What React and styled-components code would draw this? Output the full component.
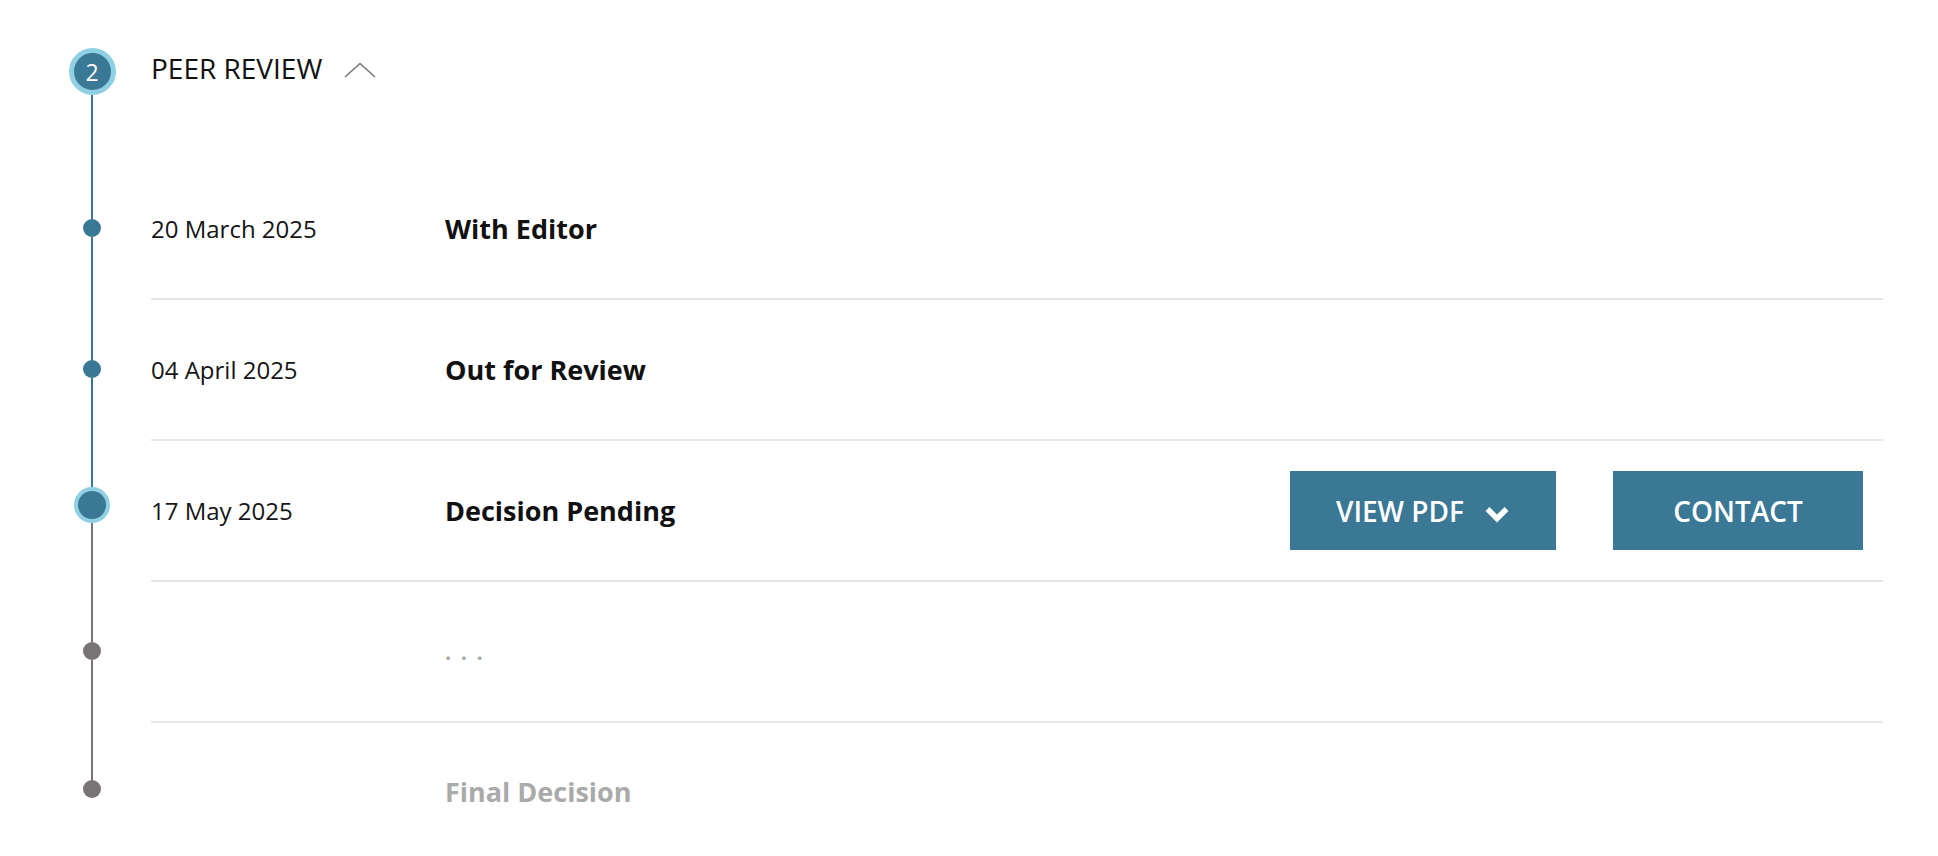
import React from 'react';
import styled, { createGlobalStyle } from 'styled-components';

const BLUE = '#3a7895';
const GRAY = '#787475';

const GlobalStyle = createGlobalStyle`
  html, body {
    margin: 0;
    background: #fff;
  }
  body {
    font-family: "Open Sans", "Liberation Sans", sans-serif;
    color: #111;
  }
`;

const Page = styled.div`
  padding: 0 55px 0 62px;
`;

const StageHeader = styled.div`
  display: flex;
  height: 159px;
`;

const Marker = styled.div`
  width: 60px;
  flex: none;
  display: flex;
  flex-direction: column;
  align-items: center;
  padding-top: ${p => p.$offset || 0}px;
  box-sizing: border-box;
`;

const Segment = styled.div`
  width: 2px;
  flex: 1;
  background: ${p => p.$color || 'transparent'};
`;

const Badge = styled.div`
  width: 47px;
  height: 47px;
  margin-top: -1px;
  flex: none;
  box-sizing: border-box;
  border-radius: 50%;
  border: 5px solid #8fd0e3;
  background: ${BLUE};
  color: #fff;
  font-size: 23px;
  display: flex;
  align-items: center;
  justify-content: center;
`;

const StageTitle = styled.div`
  margin: 49px 0 0 29px;
  height: 38px;
  display: flex;
  align-items: center;
  gap: 22px;
  font-size: 28px;
  line-height: 38px;
  color: #111;
  svg {
    margin-top: 4px;
  }
`;

const Row = styled.div`
  display: flex;
`;

const Dot = styled.div`
  flex: none;
  box-sizing: border-box;
  border-radius: 50%;
  width: ${p => (p.$current ? 36 : 18)}px;
  height: ${p => (p.$current ? 36 : 18)}px;
  margin: ${p => (p.$current ? '-14px 0 0' : '-4px 0 0')};
  background: ${p => (p.$pending ? GRAY : BLUE)};
  border: ${p => (p.$current ? '4px solid #8fd0e3' : 'none')};
`;

const RowBody = styled.div`
  flex: 1;
  margin-left: 29px;
  height: ${p => (p.$last ? 136 : 139)}px;
  display: grid;
  grid-template-columns: 294px 1fr auto;
  align-items: center;
  border-bottom: ${p => (p.$last ? 'none' : '2px solid #e6e6e6')};
`;

const DateText = styled.div`
  font-size: 24px;
  color: #151515;
`;

const StepTitle = styled.div`
  font-size: 27px;
  font-weight: 700;
  color: ${p => (p.$pending ? '#aaaaaa' : '#111')};
`;

const Ellipsis = styled.div`
  font-size: 22px;
  font-weight: 700;
  color: #a8a8a8;
  letter-spacing: 9.5px;
  margin-top: -2px;
`;

const Actions = styled.div`
  display: flex;
  gap: 57px;
  padding-right: 20px;
`;

const Button = styled.button`
  width: ${p => p.$width}px;
  height: 79px;
  border: none;
  border-radius: 0;
  background: ${BLUE};
  color: #fff;
  font-family: "Open Sans", "Liberation Sans", sans-serif;
  font-size: 28px;
  font-weight: 600;
  display: flex;
  align-items: center;
  justify-content: center;
  gap: 20px;
  padding: 0;
  cursor: pointer;
  svg {
    margin-top: 6px;
  }
`;

const ChevronUp = () => (
  <svg width="32" height="16" viewBox="0 0 32 16" fill="none">
    <polyline points="1,15 16,1.5 31,15" stroke="#7a7a7a" strokeWidth="1.6" />
  </svg>
);

const ChevronDown = () => (
  <svg width="26" height="18" viewBox="0 0 26 18" fill="none">
    <polyline points="3.5,4 13,13.5 22.5,4" stroke="#fff" strokeWidth="5.5" strokeLinejoin="miter" />
  </svg>
);

const steps = [
  { date: '20 March 2025', title: 'With Editor', above: BLUE, below: BLUE },
  { date: '04 April 2025', title: 'Out for Review', above: BLUE, below: BLUE },
  { date: '17 May 2025', title: 'Decision Pending', above: BLUE, below: GRAY, current: true },
  { ellipsis: true, above: GRAY, below: GRAY, pending: true },
  { title: 'Final Decision', above: GRAY, pending: true, last: true },
];

const App = () => {
  return (
    <Page>
      <GlobalStyle />
      <StageHeader>
        <Marker $offset={49}>
          <Badge>2</Badge>
          <Segment $color={BLUE} />
        </Marker>
        <StageTitle>
          PEER REVIEW
          <ChevronUp />
        </StageTitle>
      </StageHeader>

      {steps.map((s, i) => (
        <Row key={i}>
          <Marker>
            <Segment $color={s.above} />
            <Dot $current={s.current} $pending={s.pending} />
            <Segment $color={s.below} />
          </Marker>
          <RowBody $last={s.last}>
            <DateText>{s.date}</DateText>
            {s.ellipsis ? (
              <Ellipsis>...</Ellipsis>
            ) : (
              <StepTitle $pending={s.pending}>{s.title}</StepTitle>
            )}
            {s.current ? (
              <Actions>
                <Button $width={266}>
                  VIEW PDF
                  <ChevronDown />
                </Button>
                <Button $width={250}>CONTACT</Button>
              </Actions>
            ) : (
              <div />
            )}
          </RowBody>
        </Row>
      ))}
    </Page>
  );
};

export default App;
